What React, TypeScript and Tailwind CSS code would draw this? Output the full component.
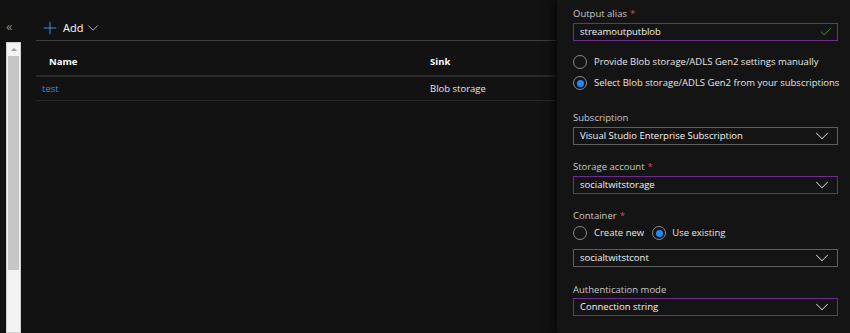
import { Check, ChevronDown, Plus } from "lucide-react";

function Label({ text, required }: { text: string; required?: boolean }) {
  return (
    <div className="h-[14px] text-[#c8c8c8]">
      {text}
      {required && <span className="ml-[3px] text-[#e0464a]">*</span>}
    </div>
  );
}

function Radio({ checked }: { checked?: boolean }) {
  return (
    <span className="flex h-[14px] w-[14px] shrink-0 items-center justify-center rounded-full border border-[#8a8a8a]">
      {checked && <span className="h-[7px] w-[7px] rounded-full bg-[#1a8cff]" />}
    </span>
  );
}

function Select({ value, dirty }: { value: string; dirty?: boolean }) {
  return (
    <div
      className={
        "flex h-[18px] items-center justify-between border pl-[6px] pr-[4px] text-[#f4f4f4] " +
        (dirty ? "border-[#6f2c8c]" : "border-[#5e5e5e]")
      }
    >
      <span>{value}</span>
      <ChevronDown size={22} strokeWidth={1.1} className="text-[#c8c8c8]" />
    </div>
  );
}

export default function App() {
  return (
    <div
      className="flex h-[333px] w-[850px] overflow-hidden bg-[#121212] text-[9.5px] leading-[14px] text-[#e6e6e6]"
      style={{ fontFamily: '"Open Sans", "Noto Sans", sans-serif' }}
    >
      {/* collapsed rail + scroll */}
      <div className="flex w-[30px] shrink-0 flex-col pl-[6px]">
        <div className="mt-[18px] h-[16px] text-[13px] leading-[16px] text-[#8a8a8a]">«</div>
        <div className="mt-[8px] flex w-[15px] flex-1 flex-col border border-[#d0d0d0] bg-[#f3f3f3]">
          <div className="flex h-[13px] items-center justify-center">
            <span className="h-0 w-0 border-x-[3px] border-b-[3px] border-x-transparent border-b-[#a0a0a0]" />
          </div>
          <div className="mx-px h-[214px] bg-[#c6c6c6]" />
        </div>
      </div>

      {/* list */}
      <div className="flex w-[526px] shrink-0 flex-col pl-[6px]">
        <div className="flex h-[41px] items-end border-b border-[#3c3c3c] pb-[2px]">
          <div className="flex items-center pl-[4px]">
            <Plus size={20} strokeWidth={1.2} className="text-[#3a8ee6]" />
            <span className="ml-[3px] text-[11px] text-white">Add</span>
            <ChevronDown size={18} strokeWidth={1.2} className="ml-[1px] text-[#c8c8c8]" />
          </div>
        </div>
        <div className="flex h-[36px] items-center border-b-2 border-[#2a2a2a] pt-[8px] font-bold text-white">
          <span className="w-[394px] pl-[13px]">Name</span>
          <span>Sink</span>
        </div>
        <div className="flex h-[24px] items-center border-b border-[#2a2a2a]">
          <span className="w-[394px] pl-[6px] text-[#3d8ae0]">test</span>
          <span>Blob storage</span>
        </div>
      </div>

      {/* output blade */}
      <div className="flex min-w-0 flex-1 flex-col border-l border-[#0a0a0a] bg-[#141414] pl-[16px] pr-[12px] shadow-[-4px_0_8px_rgba(0,0,0,0.5)]">
        <div className="mt-[7px]">
          <Label text="Output alias" required />
          <div className="mt-[2px] flex h-[18px] items-center justify-between border border-[#6f2c8c] pl-[6px] pr-[4px] text-[#f4f4f4]">
            <span>streamoutputblob</span>
            <Check size={14} strokeWidth={1.5} className="text-[#5aa02c]" />
          </div>
        </div>

        <div className="mt-[14px] flex flex-col gap-[7px] whitespace-nowrap">
          <div className="flex items-center gap-[7px]">
            <Radio />
            <span>Provide Blob storage/ADLS Gen2 settings manually</span>
          </div>
          <div className="flex items-center gap-[7px]">
            <Radio checked />
            <span>Select Blob storage/ADLS Gen2 from your subscriptions</span>
          </div>
        </div>

        <div className="mt-[21px]">
          <Label text="Subscription" />
          <div className="mt-[2px]">
            <Select value="Visual Studio Enterprise Subscription" />
          </div>
        </div>

        <div className="mt-[15px]">
          <Label text="Storage account" required />
          <div className="mt-[2px]">
            <Select value="socialtwitstorage" dirty />
          </div>
        </div>

        <div className="mt-[15px]">
          <Label text="Container" required />
          <div className="mt-[3px] flex items-center">
            <Radio />
            <span className="ml-[7px]">Create new</span>
            <span className="ml-[8px]">
              <Radio checked />
            </span>
            <span className="ml-[6px]">Use existing</span>
          </div>
          <div className="mt-[9px]">
            <Select value="socialtwitstcont" />
          </div>
        </div>

        <div className="mt-[16px]">
          <Label text="Authentication mode" />
          <div className="mt-[1px]">
            <Select value="Connection string" dirty />
          </div>
        </div>
      </div>
    </div>
  );
}
